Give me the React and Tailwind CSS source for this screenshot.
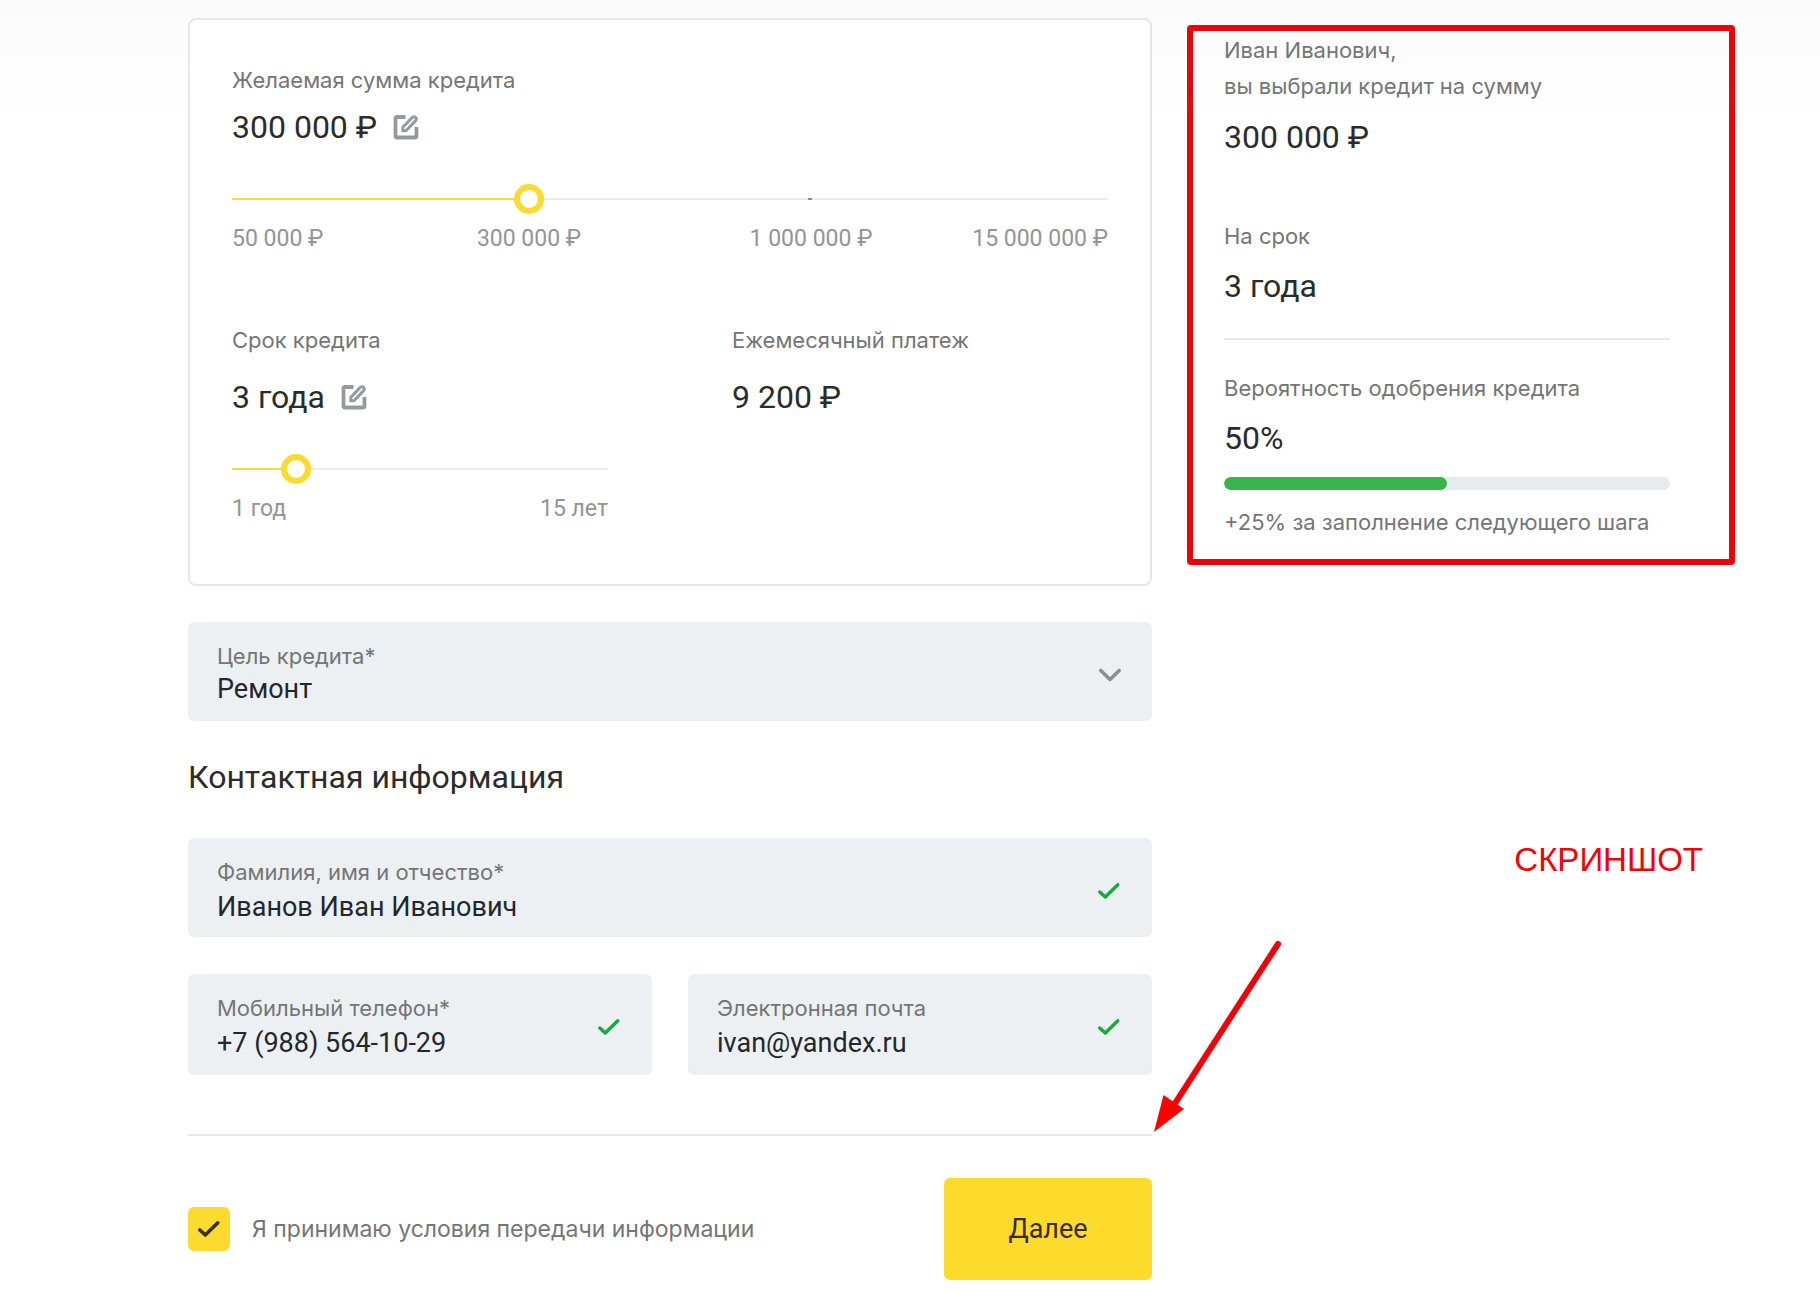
import React, { useState } from "react";

const LABEL = "font-['Inter',sans-serif] text-[22px] leading-7 text-[#757575]";
const VALUE = "text-[32px] leading-10 text-[#2b2b2b]";
const TICK = "text-[23px] leading-7 text-[#949494]";

function EditButton({ label }) {
  return (
    <button type="button" aria-label={label} className="cursor-pointer">
      <svg width="26" height="26" viewBox="0 0 26 26" fill="none" stroke="#959a9e" strokeWidth="3.8" strokeLinecap="butt" strokeLinejoin="round">
        <path d="M12.500 3H4Q2.500 3 2.500 4.500V22Q2.500 23.500 4 23.500H22Q23.500 23.500 23.500 22V13" />
        <path d="M9.800 16.800V13.200L19.400 3.400Q21 2 22.500 3.400Q24 4.900 22.700 6.600L13 16.800Z" strokeWidth="3" />
      </svg>
    </button>
  );
}

function Check({ color, width = 3.4 }) {
  return (
    <svg width="24" height="18" viewBox="0 0 24 18" fill="none" stroke={color} strokeWidth={width} strokeLinecap="round" strokeLinejoin="round">
      <path d="M2.800 10L8.300 15L20.800 2.800" />
    </svg>
  );
}

function Slider({ label, min, max, value, onChange, mark }) {
  const fill = ((value - min) / (max - min)) * 100;
  return (
    <div className="relative mt-[37px] h-[30px]">
      <input
        type="range"
        aria-label={label}
        min={min}
        max={max}
        value={value}
        onChange={(e) => onChange(Number(e.target.value))}
        style={{ backgroundImage: `linear-gradient(to right, #f3dc3c ${fill}%, #ebebeb ${fill}%)` }}
        className="block h-[30px] w-full cursor-pointer appearance-none bg-transparent bg-[length:100%_2px] bg-center bg-no-repeat outline-none [&::-webkit-slider-runnable-track]:h-[30px] [&::-webkit-slider-thumb]:size-[30px] [&::-webkit-slider-thumb]:appearance-none [&::-webkit-slider-thumb]:rounded-full [&::-webkit-slider-thumb]:border-[6px] [&::-webkit-slider-thumb]:border-[#fbdb30] [&::-webkit-slider-thumb]:bg-white"
      />
      {mark && <span className="pointer-events-none absolute top-[14px] left-[66%] h-0.5 w-1 -translate-x-1/2 bg-[#8a8a8a]" />}
    </div>
  );
}

function Field({ id, label, type = "text", defaultValue, className }) {
  return (
    <div className={`flex items-center rounded-md bg-[#ecf0f3] pt-5 pr-[31px] pl-[29px] ${className}`}>
      <div className="min-w-0 flex-1">
        <label htmlFor={id} className={`block ${LABEL}`}>{label}</label>
        <input id={id} type={type} defaultValue={defaultValue} className="mt-[5px] block h-8 w-full bg-transparent text-[27px] leading-8 text-[#23272b] outline-none" />
      </div>
      <Check color="#12ab3c" />
    </div>
  );
}

export default function App() {
  const [amount, setAmount] = useState(1);
  const [term, setTerm] = useState(3);
  return (
    <div className="min-h-screen bg-white font-['Roboto',sans-serif]">
      <div className="bg-gradient-to-b from-[#fbfbfb] to-white to-[130px]">
        <main className="grid grid-cols-[964fr_548fr] gap-[35px] pt-[18px] pr-[85px] pb-7 pl-[188px]">
          <form onSubmit={(e) => e.preventDefault()}>
            <section className="rounded-lg border-2 border-[#e6e6e6] bg-white px-[42px] pt-[46px] pb-[61px]">
              <p className={LABEL}>Желаемая сумма кредита</p>
              <div className="mt-[13px] flex items-center gap-4">
                <span className={VALUE}>300 000 ₽</span>
                <EditButton label="Изменить сумму" />
              </div>
              <Slider label="Сумма кредита" min={0} max={3} value={amount} onChange={setAmount} mark />
              <div className={`mt-[11px] grid grid-cols-[156fr_282fr_282fr_156fr] whitespace-nowrap ${TICK}`}>
                <span>50 000 ₽</span>
                <span className="text-center">300 000 ₽</span>
                <span className="text-center">1 000 000 ₽</span>
                <span className="text-right">15 000 000 ₽</span>
              </div>
              <div className="mt-[73px] grid grid-cols-[376fr_376fr] gap-[124px]">
                <div>
                  <p className={LABEL}>Срок кредита</p>
                  <div className="mt-[23px] flex items-center gap-4">
                    <span className={VALUE}>3 года</span>
                    <EditButton label="Изменить срок" />
                  </div>
                  <Slider label="Срок кредита" min={1} max={15} value={term} onChange={setTerm} />
                  <div className={`mt-[11px] flex justify-between ${TICK}`}>
                    <span>1 год</span>
                    <span>15 лет</span>
                  </div>
                </div>
                <div>
                  <p className={LABEL}>Ежемесячный платеж</p>
                  <p className={`mt-[23px] ${VALUE}`}>9 200 ₽</p>
                </div>
              </div>
            </section>

            <div className="relative mt-9 rounded-md bg-[#ecf0f3] pt-5 pr-[30px] pb-4 pl-[29px]">
              <label htmlFor="purpose" className={`block ${LABEL}`}>Цель кредита*</label>
              <select id="purpose" defaultValue="repair" className="mt-[3px] block h-8 w-full appearance-none bg-transparent text-[27px] leading-8 text-[#23272b] outline-none">
                <option value="repair">Ремонт</option>
              </select>
              <svg className="pointer-events-none absolute top-[45px] right-[30px]" width="24" height="16" viewBox="0 0 24 16" fill="none" stroke="#8b8f93" strokeWidth="3.6" strokeLinecap="round" strokeLinejoin="round">
                <path d="M2.800 3.500L12 12.500L21.200 3.500" />
              </svg>
            </div>

            <h2 className={`mt-9 ${VALUE}`}>Контактная информация</h2>

            <Field id="name" label="Фамилия, имя и отчество*" defaultValue="Иванов Иван Иванович" className="mt-[41px] pb-3.5" />
            <div className="mt-[37px] grid grid-cols-2 gap-9">
              <Field id="phone" type="tel" label="Мобильный телефон*" defaultValue="+7 (988) 564-10-29" className="pb-4" />
              <Field id="email" type="email" label="Электронная почта" defaultValue="ivan@yandex.ru" className="pb-4" />
            </div>

            <hr className="mt-[59px] border-t-2 border-[#e8e8e8]" />

            <div className="mt-[42px] flex items-center justify-between">
              <div className="flex items-center gap-[22px]">
                <span className="relative grid h-11 w-[42px] place-items-center">
                  <input id="agree" type="checkbox" defaultChecked className="peer absolute inset-0 size-full cursor-pointer appearance-none rounded-md bg-[#fddb2e]" />
                  <span className="pointer-events-none relative opacity-0 peer-checked:opacity-100">
                    <Check color="#3b2f12" width={3.6} />
                  </span>
                </span>
                <p className="font-['Inter',sans-serif] text-[23px] leading-7 text-[#757575]">
                  <label htmlFor="agree">Я принимаю</label> <a href="#terms">условия передачи информации</a>
                </p>
              </div>
              <button type="submit" className="h-[102px] w-[208px] cursor-pointer rounded-md bg-[#fddb2c] text-[27px] leading-8 text-[#3a2c10]">Далее</button>
            </div>
          </form>

          <div className="relative">
            <aside className="mt-[7px] rounded-sm border-[6px] border-[#ec0508] pt-px pr-[59px] pb-[23px] pl-[31px]">
              <p className="font-['Inter',sans-serif] text-[22px] leading-9 text-[#757575]">
                Иван Иванович,<br />вы выбрали кредит на сумму
              </p>
              <p className={`mt-[13px] ${VALUE}`}>300 000 ₽</p>
              <p className={`mt-[65px] ${LABEL}`}>На срок</p>
              <p className={`mt-4 ${VALUE}`}>3 года</p>
              <hr className="mt-8 border-t-2 border-[#e8e8e8]" />
              <p className={`mt-[34px] ${LABEL}`}>Вероятность одобрения кредита</p>
              <p className={`mt-4 ${VALUE}`}>50%</p>
              <div role="progressbar" aria-label="Вероятность одобрения" aria-valuenow={50} aria-valuemin={0} aria-valuemax={100} className="mt-[19px] h-[13px] overflow-hidden rounded-full bg-[#e8ebee]">
                <div className="h-full w-1/2 rounded-full bg-[#35b54a]" />
              </div>
              <p className={`mt-[18px] ${LABEL}`}>+25% за заполнение следующего шага</p>
            </aside>
            <p className="mt-[275px] pr-8 text-right font-['Liberation_Sans',sans-serif] text-[33px] leading-10 text-[#f40000]">СКРИНШОТ</p>
            <svg className="absolute top-[920px] -left-[35px]" width="136" height="200" viewBox="0 0 136 200" aria-hidden="true">
              <path d="M126 6L22 167" stroke="#ee0408" strokeWidth="6" strokeLinecap="round" />
              <path d="M2 194L11.500 157L32 171Z" fill="#fc0000" />
            </svg>
          </div>
        </main>
      </div>
    </div>
  );
}
